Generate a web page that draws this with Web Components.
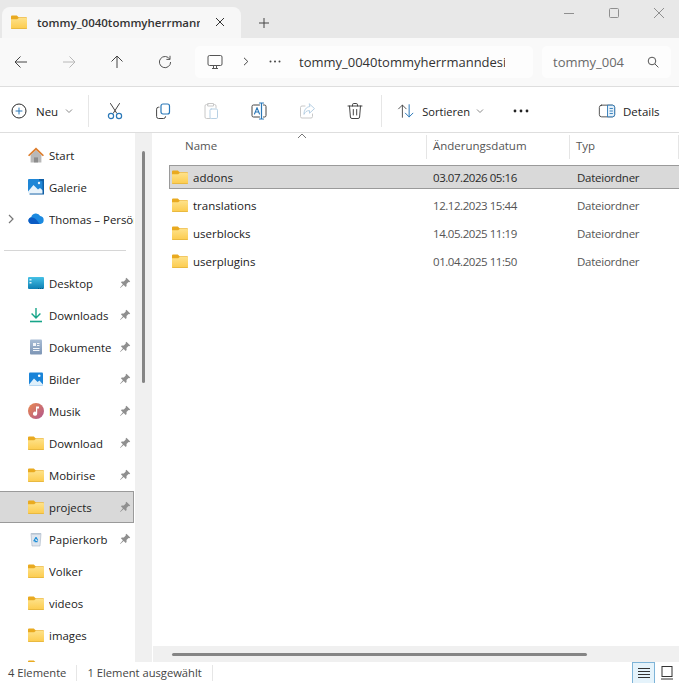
<!DOCTYPE html>
<html lang="de">
<head>
<meta charset="utf-8">
<title>Explorer</title>
<style>
    html, body { margin: 0; height: 100%; overflow: hidden; background: #fff; }
    body { font: 12px "Open Sans", "Noto Sans", sans-serif; color: #1a1a1a; }
</style>
</head>
<body>
<fx-window>
    <fx-titlebar slot="title"></fx-titlebar>
    <fx-navbar slot="nav"></fx-navbar>
    <fx-toolbar slot="tools"></fx-toolbar>
    <fx-sidebar slot="side"></fx-sidebar>
    <fx-filelist slot="list"></fx-filelist>
    <fx-statusbar slot="status"></fx-statusbar>
</fx-window>

<script>
    const INK = '#2b2b2b';
    const BLUE = '#2a78b8';

    const FOLDER = (size = 16) => `<svg width="${size}" height="${size}" viewBox="0 0 16 16">
        <defs><linearGradient id="fold" x1="0" y1="0" x2="0" y2="1"><stop offset="0" stop-color="#fee28a"/><stop offset="1" stop-color="#fccb4c"/></linearGradient></defs>
        <path d="M0 2.4a1 1 0 0 1 1-1h4.8l1.8 1.8H15a1 1 0 0 1 1 1V7H0z" fill="#e9aa20"/>
        <path d="M0 5.2h6.2l1.8-1.4h7a1 1 0 0 1 1 1V14a1 1 0 0 1-1 1H1a1 1 0 0 1-1-1z" fill="url(#fold)"/>
        <path d="M0 14h16a1 1 0 0 1-1 1H1a1 1 0 0 1-1-1z" fill="#e9b940"/>
    </svg>`;

    const line_icon = (body, size = 20) => `<svg width="${size}" height="${size}" viewBox="0 0 20 20" fill="none" stroke="${INK}" stroke-width="1" stroke-linecap="round" stroke-linejoin="round">${body}</svg>`;

    const ICONS = {
        folder: FOLDER(),
        home: `<svg width="16" height="16" viewBox="0 0 16 16"><path d="M2.6 8v7.4h10.8V8L8 3z" fill="#b8b8b8"/><path d="M6 15.4v-5h4v5z" fill="#8c8c8c"/><path d="M0 8.2 8 .6l8 7.6-1.2 1.1L8 3 1.2 9.3z" fill="#dd7d2c"/></svg>`,
        gallery: `<svg width="16" height="16" viewBox="0 0 16 16"><rect y="0" width="16" height="14" rx="1" fill="#1f86d6"/><path d="M0 12.5 5.5 6 10 10.5l2-1.6L16 12.5V14H0z" fill="#e8f3fb"/><path d="M11 0h5v15.5H1.5v-1h13V2.2L11 1.4z" fill="#0f5fa6"/><circle cx="11" cy="4" r="1.2" fill="#e8f3fb"/></svg>`,
        cloud: `<svg width="16" height="16" viewBox="0 0 16 16"><path d="M3.6 13a3.4 3.4 0 0 1-.4-6.7 4.8 4.8 0 0 1 9-1.2A4 4 0 0 1 12.4 13z" fill="#1c8ae0"/><path d="M3.6 13a3.4 3.4 0 0 1-1.6-6.3C5 5.6 8 7.6 9.4 10L11.6 13z" fill="#0b5cc4"/></svg>`,
        desktop: `<svg width="16" height="16" viewBox="0 0 16 16"><defs><linearGradient id="d" x1="0" y1="0" x2="0" y2="1"><stop offset="0" stop-color="#45c1e6"/><stop offset="1" stop-color="#0d7fb3"/></linearGradient></defs><rect y="2" width="16" height="12" rx="1" fill="url(#d)"/><path d="M1.5 4h2v1.5h-2zM1.5 7h2v1.5h-2z" fill="#dff5fb"/><path d="M10 13h1v1h-1zM12 13h1v1h-1zM14 13h1v1h-1z" fill="#0a5c85"/></svg>`,
        download: `<svg width="16" height="16" viewBox="0 0 16 16" fill="none" stroke="#17a589" stroke-width="1.4"><path d="M8 1v9.5M3.6 6.6 8 11l4.4-4.4"/><path d="M2 14.5h12" stroke-width="1.6"/></svg>`,
        docs: `<svg width="16" height="16" viewBox="0 0 16 16"><defs><linearGradient id="e" x1="0" y1="0" x2="0" y2="1"><stop offset="0" stop-color="#a9bdd6"/><stop offset="1" stop-color="#7d95b5"/></linearGradient></defs><rect x="2" y="0.5" width="12" height="15" rx="1" fill="url(#e)"/><path d="M5 4h3v3H5zM9 4h2.5v1H9zM9 6h2.5v1H9zM5 9h6.5v1H5zM5 11h6.5v1H5z" fill="#f3f6fa"/></svg>`,
        pictures: `<svg width="16" height="16" viewBox="0 0 16 16"><rect x="1" y="1.5" width="14" height="13" rx="1" fill="#1a84d8"/><path d="M1 13.5 6 7.5l3.6 3.6L11.4 9.6 15 13.5v.1a1 1 0 0 1-1 1H2a1 1 0 0 1-1-1z" fill="#dff0fb"/><circle cx="11.2" cy="4.8" r="1.3" fill="#fff"/></svg>`,
        music: `<svg width="16" height="16" viewBox="0 0 16 16"><defs><linearGradient id="m" x1="0" y1="0" x2="1" y2="1"><stop offset="0" stop-color="#ea8a4f"/><stop offset="1" stop-color="#b0558f"/></linearGradient></defs><circle cx="8" cy="8" r="8" fill="url(#m)"/><path d="M8 3.5h3v2H9.2v5.2a2.1 2.1 0 1 1-1.2-1.9z" fill="#fff"/></svg>`,
        trash: `<svg width="16" height="16" viewBox="0 0 16 16"><path d="M3 2.5h10L12 15H4z" fill="#dfe6ee" stroke="#a4b2c2" stroke-width=".6"/><path d="M3.4 2h9.2v1.6H3.4z" fill="#b7c4d2"/><path d="M8 6.2 6 9.6h1.6M8 6.2l1.8 3.2M6.6 10.6h3" stroke="#1f8fd8" stroke-width="1.1" fill="none"/></svg>`
    };

    const TOOL_ICONS = {
        plus: `<svg width="16" height="16" viewBox="0 0 16 16" fill="none"><circle cx="8" cy="8" r="7" stroke="${INK}"/><path d="M8 4.6v6.8M4.6 8h6.8" stroke="${BLUE}"/></svg>`,
        cut: line_icon(`<path d="M5.5 2.5 11.6 12M14.5 2.5 8.4 12" stroke="#444"/><circle cx="6" cy="15" r="2.6" stroke="${BLUE}" stroke-width="1.2"/><circle cx="14" cy="15" r="2.6" stroke="${BLUE}" stroke-width="1.2"/>`),
        copy: line_icon(`<rect x="8" y="3" width="8.5" height="10" rx="2" stroke="${BLUE}" stroke-width="1.2"/><path d="M6 6.2H5.6A2 2 0 0 0 3.6 8.2v7.3a2 2 0 0 0 2 2h5a2 2 0 0 0 2-1.8" stroke="#444"/>`),
        paste: line_icon(`<path d="M7 3.5H5.5a1.5 1.5 0 0 0-1.5 1.5v11a1.5 1.5 0 0 0 1.5 1.5H9" stroke="#c8c8c8"/><path d="M7 2.5h5.5v2.5H7zM12.5 3.5h1A1.5 1.5 0 0 1 15 5v2" stroke="#c8c8c8"/><rect x="9" y="8" width="7.5" height="9.5" rx="1.2" stroke="#b7d0e4"/>`),
        rename: line_icon(`<path d="M10.5 4H4.5A1.5 1.5 0 0 0 3 5.5v9A1.5 1.5 0 0 0 4.5 16h6M14.5 4h1A1.5 1.5 0 0 1 17 5.5v9a1.5 1.5 0 0 1-1.5 1.5h-1" stroke="#444"/><path d="M10.5 2h4M12.5 2v16M10.5 18h4" stroke="${BLUE}" stroke-width="1.2"/><path d="M5.5 13 8 6.6l2.5 6.4M6.4 11h3.2" stroke="${BLUE}" stroke-width="1.1"/>`),
        share: line_icon(`<path d="M8 5H5a1.5 1.5 0 0 0-1.5 1.5v9A1.5 1.5 0 0 0 5 17h9a1.5 1.5 0 0 0 1.5-1.5V13" stroke="#c8c8c8"/><path d="M12.5 3 17.5 7.6l-5 4.6V9.6C9.5 9.6 8 11 7 13.4 7 9 9 6 12.5 5.6z" stroke="#b7d0e4"/>`),
        trash: line_icon(`<path d="M3 5h14M7.5 5V3.8A1.3 1.3 0 0 1 8.8 2.5h2.4a1.3 1.3 0 0 1 1.3 1.3V5M4.5 5l.9 11a1.6 1.6 0 0 0 1.6 1.5h6a1.6 1.6 0 0 0 1.6-1.5l.9-11M8.3 8.5v5.5M11.7 8.5v5.5" stroke="#444"/>`),
        sort: line_icon(`<path d="M6 17V3.5M1.8 7.6 6 3.4l4.2 4.2" stroke="#444"/><path d="M13.5 3v13.5M9.3 12.4l4.2 4.2 4.2-4.2" stroke="${BLUE}" stroke-width="1.1"/>`, 18),
        details: line_icon(`<rect x="1.5" y="3.5" width="17" height="13" rx="2.5" stroke="#444"/><path d="M11 3.5h5a2.5 2.5 0 0 1 2.5 2.5v8a2.5 2.5 0 0 1-2.5 2.5h-5z" stroke="${BLUE}" fill="#e6f1fa"/><path d="M13.3 7.2h2.8M13.3 10h2.8M13.3 12.8h2.8" stroke="${BLUE}"/>`, 18)
    };

    const CHEVRON_DOWN = `<svg width="8" height="6" viewBox="0 0 8 6" fill="none" stroke="#8a8a8a"><path d="M1 1.5 4 4.5l3-3"/></svg>`;

    function make_shadow(host, html) {
        host.attachShadow({ mode: 'open' }).innerHTML = html;
    }

    customElements.define('fx-window', class extends HTMLElement {
        constructor() {
            super();
            make_shadow(this, `
                <style>
                    :host { display: grid; grid-template-rows: 38px 49px 46px 1fr 21px; grid-template-columns: 153px 1fr; width: 679px; height: 683px; overflow: hidden; }
                    ::slotted(*) { min-width: 0; min-height: 0; }
                </style>
                <slot name="title"></slot>
                <slot name="nav"></slot>
                <slot name="tools"></slot>
                <slot name="side"></slot>
                <slot name="list"></slot>
                <slot name="status"></slot>`);
        }
    });

    customElements.define('fx-titlebar', class extends HTMLElement {
        constructor() {
            super();
            make_shadow(this, `
                <style>
                    :host { grid-column: 1 / 3; display: flex; align-items: flex-end; background: #e8e8e8; padding-left: 2px; }
                    .tab { width: 239px; height: 31px; box-sizing: border-box; background: #f7f7f7; border-radius: 8px 8px 0 0; display: flex; align-items: center; padding: 0 0 1px 9px; }
                    .label { width: 163px; margin-left: 10px; overflow: hidden; white-space: nowrap; font-weight: 600; font-size: 11.5px; color: #333; }
                    .close { margin-left: 14px; display: flex; }
                    .plus { margin-left: 17px; margin-bottom: 9px; display: flex; }
                    .controls { margin-left: auto; margin-bottom: 20px; display: flex; align-items: center; gap: 35px; padding-right: 15px; }
                    svg { display: block; }
                </style>
                <div class="tab">
                    ${FOLDER(16)}
                    <span class="label">tommy_0040tommyherrmanndesign</span>
                    <span class="close"><svg width="12" height="12" viewBox="0 0 12 12" stroke="#333"><path d="M2 2l8 8M10 2l-8 8"/></svg></span>
                </div>
                <span class="plus"><svg width="12" height="12" viewBox="0 0 12 12" stroke="#444"><path d="M6 1v10M1 6h10"/></svg></span>
                <div class="controls">
                    <svg width="10" height="10" viewBox="0 0 10 10" stroke="#8f8f8f"><path d="M0 5.5h10"/></svg>
                    <svg width="10" height="10" viewBox="0 0 10 10" stroke="#8f8f8f" fill="none"><rect x=".5" y=".5" width="9" height="9" rx="1"/></svg>
                    <svg width="10" height="10" viewBox="0 0 10 10" stroke="#8f8f8f"><path d="M0 0l10 10M10 0 0 10"/></svg>
                </div>`);
        }
    });

    customElements.define('fx-navbar', class extends HTMLElement {
        constructor() {
            super();
            const arrow = (d, colour) => `<span class="nav"><svg width="14" height="14" viewBox="0 0 14 14" fill="none" stroke="${colour}"><path d="${d}"/></svg></span>`;
            make_shadow(this, `
                <style>
                    :host { grid-column: 1 / 3; display: flex; align-items: center; box-sizing: border-box; background: #f9f9f9; border-bottom: 1px solid #dedede; padding: 0 8px 1px 0; }
                    .nav { width: 48px; flex: none; display: flex; justify-content: center; }
                    .buttons { display: flex; margin-left: -3px; }
                    .box { height: 32px; background: #fdfdfd; border-radius: 5px; display: flex; align-items: center; white-space: nowrap; overflow: hidden; box-sizing: border-box; }
                    .address { width: 338px; margin-left: 6px; padding-left: 12px; }
                    .address .chev { margin-left: 20px; display: flex; }
                    .address .dots { margin-left: 20px; width: 30px; flex: none; display: flex; }
                    .path { width: 206px; flex: none; overflow: hidden; font-size: 13px; color: #333; }
                    .search { width: 129px; margin-left: 9px; padding: 0 12px 0 11px; justify-content: space-between; font-size: 13px; color: #6a6a6a; }
                    svg { display: block; flex: none; }
                </style>
                <div class="buttons">
                    ${arrow('M13 7H1M6.5 1.5 1 7l5.5 5.5', '#444')}
                    ${arrow('M1 7h12M7.5 1.5 13 7l-5.5 5.5', '#b8b8b8')}
                    ${arrow('M7 13V1M1.5 6.5 7 1l5.5 5.5', '#444')}
                    ${arrow('M11.8 4.2A5.6 5.6 0 1 0 12.6 7M12 .8v3.6H8.4', '#555')}
                </div>
                <div class="box address">
                    <svg width="16" height="16" viewBox="0 0 16 16" fill="none" stroke="#555"><rect x="1" y="1.5" width="14" height="10" rx="1.5"/><path d="M5 14.5h6M6.5 12v2.5M9.5 12v2.5"/></svg>
                    <span class="chev"><svg width="6" height="9" viewBox="0 0 6 9" fill="none" stroke="#444"><path d="M1 .8 4.8 4.5 1 8.2"/></svg></span>
                    <span class="dots"><svg width="12" height="3" viewBox="0 0 12 3" fill="#444"><circle cx="1.5" cy="1.5" r="1"/><circle cx="6" cy="1.5" r="1"/><circle cx="10.5" cy="1.5" r="1"/></svg></span>
                    <span class="path">tommy_0040tommyherrmanndesign</span>
                </div>
                <div class="box search">
                    <span>tommy_004</span>
                    <svg width="12" height="12" viewBox="0 0 12 12" fill="none" stroke="#555"><circle cx="5" cy="5" r="3.8"/><path d="M8 8l3.4 3.4"/></svg>
                </div>`);
        }
    });

    customElements.define('fx-toolbar', class extends HTMLElement {
        constructor() {
            super();
            const tool = (name) => `<span class="tool">${TOOL_ICONS[name]}</span>`;
            make_shadow(this, `
                <style>
                    :host { grid-column: 1 / 3; display: flex; align-items: center; box-sizing: border-box; background: #fff; border-bottom: 1px solid #dedede; padding: 3px 0 0 11px; white-space: nowrap; color: #222; font-size: 11.5px; }
                    .tool { width: 48px; flex: none; display: flex; justify-content: center; }
                    .sep { width: 1px; height: 32px; background: #e6e6e6; flex: none; }
                    .neu { margin-left: 9px; }
                    .chev { margin-left: 7px; display: flex; }
                    svg { display: block; }
                </style>
                ${TOOL_ICONS.plus}
                <span class="neu">Neu</span>
                <span class="chev">${CHEVRON_DOWN}</span>
                <span class="sep" style="margin: 0 2px 0 15px"></span>
                ${tool('cut')}${tool('copy')}${tool('paste')}${tool('rename')}${tool('share')}${tool('trash')}
                <span class="sep" style="margin-left: 2px"></span>
                <span style="margin-left: 15px; display: flex">${TOOL_ICONS.sort}</span>
                <span style="margin-left: 7px; font-size: 11.1px">Sortieren</span>
                <span class="chev" style="margin-left: 6px">${CHEVRON_DOWN}</span>
                <span style="margin-left: 29px; display: flex"><svg width="16" height="4" viewBox="0 0 16 4" fill="#222"><circle cx="2" cy="2" r="1.4"/><circle cx="8" cy="2" r="1.4"/><circle cx="14" cy="2" r="1.4"/></svg></span>
                <span style="margin-left: 69px; display: flex">${TOOL_ICONS.details}</span>
                <span style="margin-left: 7px">Details</span>`);
        }
    });

    customElements.define('fx-nav-item', class extends HTMLElement {
        constructor() {
            super();
            make_shadow(this, `
                <style>
                    :host { display: flex; align-items: center; height: 32px; box-sizing: border-box; padding-left: 28px; color: #222; white-space: nowrap; font-size: 11.4px; flex: none; position: relative; }
                    :host([selected]) { background: #d9d9d9; box-shadow: inset 0 1px 0 #9a9a9a, inset 0 -1px 0 #9a9a9a, inset -1px 0 0 #9a9a9a; }
                    :host([pinned]) { padding-right: 3px; }
                    .label { margin-left: 5px; flex: 1; min-width: 0; overflow: hidden; }
                    .icon { display: flex; width: 16px; height: 16px; flex: none; }
                    .pin { display: flex; flex: none; }
                    .expander { position: absolute; left: 8px; top: 11px; display: flex; }
                    svg { display: block; }
                </style>
                <span class="expander"></span>
                <span class="icon"></span>
                <span class="label"><slot></slot></span>
                <span class="pin"></span>`);
        }

        connectedCallback() {
            const root = this.shadowRoot;
            root.querySelector('.icon').innerHTML = ICONS[this.getAttribute('icon')] || '';
            if (this.hasAttribute('expandable')) {
                root.querySelector('.expander').innerHTML = `<svg width="6" height="10" viewBox="0 0 6 10" fill="none" stroke="#777" stroke-width="1.2"><path d="M1 1l4 4-4 4"/></svg>`;
            }
            if (this.hasAttribute('pinned')) {
                root.querySelector('.pin').innerHTML = `<svg width="12" height="12" viewBox="0 0 12 12" fill="#8f8f8f"><path d="M7.4.8l3.8 3.8-1 .7-.7-.2-2 2 .1 2-.9.9-2-2L1.3 11 1 10.7l2.9-3.4-2-2 .9-.9 2 .1 2-2-.2-.7z"/></svg>`;
            }
        }
    });

    customElements.define('fx-sidebar', class extends HTMLElement {
        constructor() {
            super();
            make_shadow(this, `
                <style>
                    :host { display: flex; overflow: hidden; background: #fff; }
                    .items { width: 134px; flex: none; padding-top: 6px; display: flex; flex-direction: column; overflow: hidden; box-sizing: border-box; }
                    .divider { height: 1px; background: #d6d6d6; margin: 15px 8px 16px 4px; flex: none; }
                    .track { width: 17px; flex: none; background: #f0f0f0; padding: 18px 0 0 7px; box-sizing: border-box; margin-left: 1px; }
                    .thumb { width: 3px; height: 232px; background: #858585; border-radius: 2px; }
                </style>
                <div class="items">
                    <fx-nav-item icon="home">Start</fx-nav-item>
                    <fx-nav-item icon="gallery">Galerie</fx-nav-item>
                    <fx-nav-item icon="cloud" expandable>Thomas – Persönlich</fx-nav-item>
                    <div class="divider"></div>
                    <fx-nav-item icon="desktop" pinned>Desktop</fx-nav-item>
                    <fx-nav-item icon="download" pinned>Downloads</fx-nav-item>
                    <fx-nav-item icon="docs" pinned>Dokumente</fx-nav-item>
                    <fx-nav-item icon="pictures" pinned>Bilder</fx-nav-item>
                    <fx-nav-item icon="music" pinned>Musik</fx-nav-item>
                    <fx-nav-item icon="folder" pinned>Download</fx-nav-item>
                    <fx-nav-item icon="folder" pinned>Mobirise</fx-nav-item>
                    <fx-nav-item icon="folder" pinned selected>projects</fx-nav-item>
                    <fx-nav-item icon="trash" pinned>Papierkorb</fx-nav-item>
                    <fx-nav-item icon="folder">Volker</fx-nav-item>
                    <fx-nav-item icon="folder">videos</fx-nav-item>
                    <fx-nav-item icon="folder">images</fx-nav-item>
                    <fx-nav-item icon="folder"></fx-nav-item>
                </div>
                <div class="track"><div class="thumb"></div></div>`);
        }
    });

    customElements.define('fx-file-row', class extends HTMLElement {
        constructor() {
            super();
            make_shadow(this, `
                <style>
                    :host { display: grid; grid-template-columns: 264px 144px 1fr; align-items: center; height: 24px; box-sizing: border-box; margin-bottom: 4px; color: #555; font-size: 11.5px; white-space: nowrap; }
                    :host([selected]) { background: #d9d9d9; box-shadow: inset 0 1px 0 #9a9a9a, inset 0 -1px 0 #9a9a9a, inset 1px 0 0 #9a9a9a; color: #2a2a2a; }
                    .name { display: flex; align-items: center; color: #222; padding-left: 3px; gap: 5px; }
                    .date { letter-spacing: -.45px; }
                    .kind { letter-spacing: -.25px; }
                    svg { display: block; }
                </style>
                <span class="name">${FOLDER(16)}<slot></slot></span>
                <span class="date"></span>
                <span class="kind">Dateiordner</span>`);
        }

        connectedCallback() {
            this.shadowRoot.querySelector('.date').textContent = this.getAttribute('date');
        }
    });

    customElements.define('fx-filelist', class extends HTMLElement {
        constructor() {
            super();
            make_shadow(this, `
                <style>
                    :host { display: flex; flex-direction: column; background: #fff; overflow: hidden; font-size: 11.5px; }
                    .head { height: 32px; flex: none; display: grid; grid-template-columns: 274px 143px 1fr; color: #555; padding-top: 2px; box-sizing: border-box; position: relative; }
                    .head span { padding-left: 6px; height: 24px; line-height: 22px; box-sizing: border-box; border-right: 1px solid #e5e5e5; }
                    .head span:first-child { padding-left: 32px; }
                    .head span:last-child { border: 0; padding-left: 7px; }
                    .caret { position: absolute; left: 144px; top: 0; }
                    .rows { flex: 1; padding-left: 16px; min-height: 0; }
                    .track { height: 16px; flex: none; background: #f0f0f0; padding: 7px 0 0 19px; box-sizing: border-box; }
                    .thumb { width: 415px; height: 3px; background: #858585; border-radius: 2px; }
                </style>
                <div class="head">
                    <span>Name</span><span>Änderungsdatum</span><span>Typ</span>
                    <svg class="caret" width="10" height="6" viewBox="0 0 10 6" fill="none" stroke="#777"><path d="M1 5l4-4 4 4"/></svg>
                </div>
                <div class="rows">
                    <fx-file-row selected date="03.07.2026 05:16">addons</fx-file-row>
                    <fx-file-row date="12.12.2023 15:44">translations</fx-file-row>
                    <fx-file-row date="14.05.2025 11:19">userblocks</fx-file-row>
                    <fx-file-row date="01.04.2025 11:50">userplugins</fx-file-row>
                </div>
                <div class="track"><div class="thumb"></div></div>`);
        }
    });

    customElements.define('fx-statusbar', class extends HTMLElement {
        constructor() {
            super();
            make_shadow(this, `
                <style>
                    :host { grid-column: 1 / 3; display: flex; align-items: center; background: #fff; font-size: 11.2px; color: #444; padding-left: 8px; white-space: nowrap; }
                    .sep { width: 1px; height: 16px; background: #e6e6e6; margin: 0 10px; flex: none; }
                    .views { margin-left: auto; display: flex; align-self: stretch; }
                    .view { width: 24px; display: flex; align-items: center; justify-content: center; box-sizing: border-box; }
                    .view.on { width: 23px; background: #e5f3fb; border: 1px solid #7eb4d8; border-bottom: 0; }
                    svg { display: block; }
                </style>
                <span>4 Elemente</span>
                <span class="sep"></span>
                <span>1 Element ausgewählt</span>
                <span class="sep"></span>
                <div class="views">
                    <span class="view on"><svg width="14" height="12" viewBox="0 0 14 12" stroke="#333"><path d="M1 1.5h12M1 4.5h12M1 7.5h12M1 10.5h12"/></svg></span>
                    <span class="view"><svg width="14" height="14" viewBox="0 0 14 14" fill="none" stroke="#333"><rect x="2" y=".5" width="10" height="10"/><path d="M1 13h12"/></svg></span>
                </div>`);
        }
    });
</script>
</body>
</html>
